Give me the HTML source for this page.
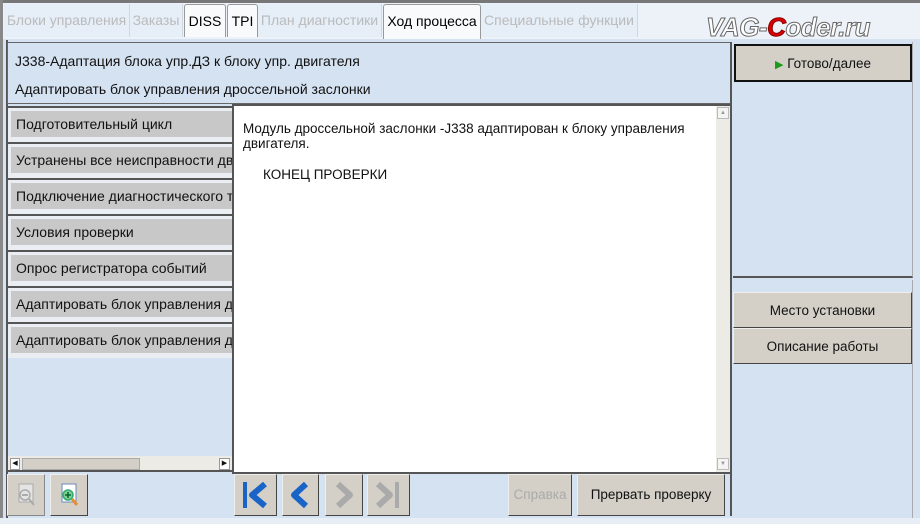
<!DOCTYPE html>
<html><head><meta charset="utf-8"><style>
*{margin:0;padding:0;box-sizing:border-box}
body{width:920px;height:524px;overflow:hidden;background:#d5e2f2;font-family:"Liberation Sans",sans-serif;font-size:13px;color:#111;position:relative}
.a{position:absolute}
.tab{position:absolute;top:4px;height:33px;line-height:33px;font-size:14px;color:#bbb;text-align:center;background:#e6eef8;border-right:1px solid #d0d8e0}
.tab.on{color:#000;background:#f8fafc;border:1px solid #999;border-bottom:none;border-radius:3px 3px 0 0}
.li{position:absolute;left:8px;width:224px;height:36px;border-top:2px solid #555;background:#eaeef2}
.li div{position:absolute;left:3px;top:3px;right:0;height:26px;background:#c8c8c8;line-height:26px;padding-left:5px;font-size:14px;white-space:nowrap;overflow:hidden}
.btn{position:absolute;background:#d4d0c8;border:1px solid;border-color:#eee #444 #444 #eee;text-align:center;font-size:13.5px}
</style></head><body>
<div class="a" style="left:0;top:0;width:920px;height:3px;background:#777"></div>
<div class="a" style="left:0;top:0;width:3px;height:524px;background:#888"></div>
<div class="a" style="left:3px;top:3px;width:917px;height:36px;background:#edf2f9"></div>
<div class="tab" style="left:4px;width:126px">Блоки управления</div>
<div class="tab" style="left:130px;width:53px">Заказы</div>
<div class="tab on" style="left:184px;width:42px">DISS</div>
<div class="tab on" style="left:227px;width:31px">TPI</div>
<div class="tab" style="left:258px;width:124px">План диагностики</div>
<div class="tab on" style="left:383px;width:98px;height:35px">Ход процесса</div>
<div class="tab" style="left:481px;width:157px">Специальные функции</div>
<div class="a" style="left:706px;top:12px;font-size:26px;font-style:italic;color:#fff;-webkit-text-stroke:1px #666;font-weight:bold;letter-spacing:-.5px">VAG-<span style="color:#d00;-webkit-text-stroke:1px #800">C</span>oder.ru</div>
<div class="a" style="left:6px;top:40px;width:2px;height:480px;background:#555"></div>
<div class="a" style="left:7px;top:42px;width:725px;height:62px;border:1px solid #666;background:#d5e2f2"></div>
<div class="a" style="left:15px;top:53px;font-size:14px">J338-Адаптация блока упр.ДЗ к блоку упр. двигателя</div>
<div class="a" style="left:15px;top:81px;font-size:14px">Адаптировать блок управления дроссельной заслонки</div>
<div class="a" style="left:8px;top:104px;width:225px;height:368px;background:#d5e2f2"></div>
<div class="li" style="top:106px"><div>Подготовительный цикл</div></div>
<div class="li" style="top:142px"><div>Устранены все неисправности двигателя</div></div>
<div class="li" style="top:178px"><div>Подключение диагностического тестера</div></div>
<div class="li" style="top:214px"><div>Условия проверки</div></div>
<div class="li" style="top:250px"><div>Опрос регистратора событий</div></div>
<div class="li" style="top:286px"><div>Адаптировать блок управления дроссельной</div></div>
<div class="li" style="top:322px"><div>Адаптировать блок управления дроссельной</div></div>
<div class="a" style="left:8px;top:456px;width:224px;height:16px;background:#ecebe6;border-bottom:2px solid #555"></div>
<div class="a" style="left:10px;top:458px;width:10px;height:12px;background:#fff;border:1px solid #999;font-size:7px;line-height:10px;text-align:center">◀</div>
<div class="a" style="left:22px;top:458px;width:118px;height:12px;background:#d4d0c8;border:1px solid #aaa"></div>
<div class="a" style="left:219px;top:458px;width:11px;height:12px;background:#fff;border:1px solid #999;font-size:7px;line-height:10px;text-align:center">▶</div>
<div class="a" style="left:232px;top:104px;width:500px;height:370px;border:2px solid #555;border-right-color:#999;background:#fff"></div>
<div class="a" style="left:716px;top:106px;width:14px;height:366px;background:#ecebe6"></div>
<div class="a" style="left:717px;top:107px;width:12px;height:12px;background:#f4f4f4;border:1px solid #bbb;font-size:6px;color:#999;text-align:center;line-height:10px">▲</div>
<div class="a" style="left:717px;top:458px;width:12px;height:12px;background:#f4f4f4;border:1px solid #bbb;font-size:6px;color:#999;text-align:center;line-height:10px">▼</div>
<div class="a" style="left:243px;top:121px;font-size:13.5px;line-height:15px;width:460px">Модуль дроссельной заслонки -J338 адаптирован к блоку управления двигателя.</div>
<div class="a" style="left:263px;top:167px;font-size:13.5px">КОНЕЦ ПРОВЕРКИ</div>
<div class="btn" style="left:7px;top:474px;width:38px;height:42px;border-color:#eee #888 #888 #eee"><svg width="36" height="40"><rect x="11" y="9" width="14" height="18" fill="#e4e4e4" stroke="#aaa"/><circle cx="17" cy="20" r="5" fill="none" stroke="#aaa" stroke-width="1.5"/><path d="M14 20h6M21 24l5 6" stroke="#aaa" stroke-width="2"/></svg></div>
<div class="btn" style="left:50px;top:474px;width:38px;height:42px"><svg width="36" height="40"><rect x="11" y="9" width="14" height="18" fill="#fff" stroke="#6a8ab8"/><circle cx="17" cy="20" r="5" fill="#7fd08a" stroke="#3a7" stroke-width="1.5"/><path d="M14 20h6M17 17v6" stroke="#063" stroke-width="1.5"/><path d="M21 24l5 6" stroke="#e89030" stroke-width="3"/></svg></div>
<div class="btn" style="left:234px;top:474px;width:43px;height:42px"><svg width="41" height="40"><rect x="8" y="7" width="4" height="26" fill="#1a64c8"/><path d="M30 9L17 20l13 11" fill="none" stroke="#1a64c8" stroke-width="6" stroke-linejoin="round"/></svg></div>
<div class="btn" style="left:282px;top:474px;width:37px;height:42px"><svg width="35" height="40"><path d="M23 9L11 20l12 11" fill="none" stroke="#1a64c8" stroke-width="6" stroke-linejoin="round"/></svg></div>
<div class="btn" style="left:325px;top:474px;width:38px;height:42px"><svg width="36" height="40"><path d="M12 9l12 11-12 11" fill="none" stroke="#aaa" stroke-width="6" stroke-linejoin="round"/></svg></div>
<div class="btn" style="left:367px;top:474px;width:43px;height:42px"><svg width="41" height="40"><path d="M10 9l12 11-12 11" fill="none" stroke="#aaa" stroke-width="6" stroke-linejoin="round"/><rect x="27" y="7" width="4" height="26" fill="#aaa"/></svg></div>
<div class="btn" style="left:508px;top:474px;width:64px;height:42px;line-height:40px;color:#aaa">Справка</div>
<div class="btn" style="left:577px;top:474px;width:148px;height:42px;line-height:40px">Прервать проверку</div>
<div class="a" style="left:730px;top:42px;width:2px;height:474px;background:#555"></div>
<div class="a" style="left:733px;top:42px;width:180px;height:236px;border-right:1px solid #aaa;border-bottom:2px solid #555"></div>
<div class="btn" style="left:734px;top:44px;width:178px;height:38px;border:2px solid #111;line-height:36px"><span style="color:#1a9a1a;font-size:11px">▶</span> Готово/далее</div>
<div class="a" style="left:733px;top:280px;width:180px;height:238px;border-right:1px solid #aaa"></div>
<div class="btn" style="left:733px;top:292px;width:179px;height:36px;line-height:35px">Место установки</div>
<div class="btn" style="left:733px;top:328px;width:179px;height:36px;line-height:35px">Описание работы</div>
<div class="a" style="left:0;top:518px;width:920px;height:6px;background:#e8eef6"></div>
</body></html>
